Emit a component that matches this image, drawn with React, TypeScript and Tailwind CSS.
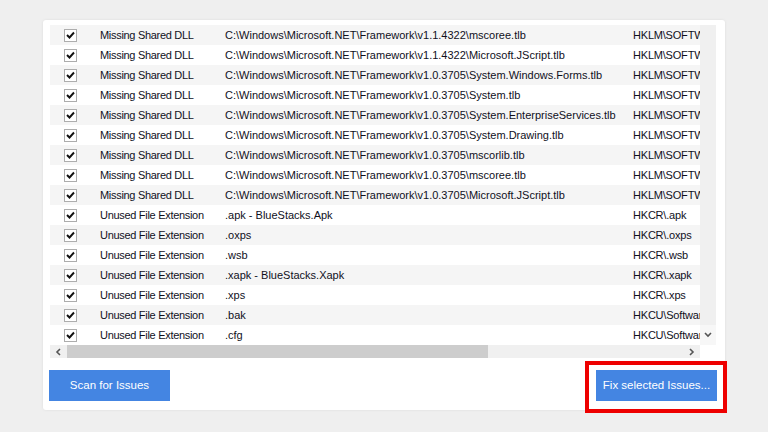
import React from 'react';

interface IssueRow {
  problem: string;
  data: string;
  registry: string;
}

const NET = 'C:\\Windows\\Microsoft.NET\\Framework\\';

const rows: IssueRow[] = [
  { problem: 'Missing Shared DLL', data: NET + 'v1.1.4322\\mscoree.tlb', registry: 'HKLM\\SOFTWARE\\Classes\\TypeLib' },
  { problem: 'Missing Shared DLL', data: NET + 'v1.1.4322\\Microsoft.JScript.tlb', registry: 'HKLM\\SOFTWARE\\Classes\\TypeLib' },
  { problem: 'Missing Shared DLL', data: NET + 'v1.0.3705\\System.Windows.Forms.tlb', registry: 'HKLM\\SOFTWARE\\Classes\\TypeLib' },
  { problem: 'Missing Shared DLL', data: NET + 'v1.0.3705\\System.tlb', registry: 'HKLM\\SOFTWARE\\Classes\\TypeLib' },
  { problem: 'Missing Shared DLL', data: NET + 'v1.0.3705\\System.EnterpriseServices.tlb', registry: 'HKLM\\SOFTWARE\\Classes\\TypeLib' },
  { problem: 'Missing Shared DLL', data: NET + 'v1.0.3705\\System.Drawing.tlb', registry: 'HKLM\\SOFTWARE\\Classes\\TypeLib' },
  { problem: 'Missing Shared DLL', data: NET + 'v1.0.3705\\mscorlib.tlb', registry: 'HKLM\\SOFTWARE\\Classes\\TypeLib' },
  { problem: 'Missing Shared DLL', data: NET + 'v1.0.3705\\mscoree.tlb', registry: 'HKLM\\SOFTWARE\\Classes\\TypeLib' },
  { problem: 'Missing Shared DLL', data: NET + 'v1.0.3705\\Microsoft.JScript.tlb', registry: 'HKLM\\SOFTWARE\\Classes\\TypeLib' },
  { problem: 'Unused File Extension', data: '.apk - BlueStacks.Apk', registry: 'HKCR\\.apk' },
  { problem: 'Unused File Extension', data: '.oxps', registry: 'HKCR\\.oxps' },
  { problem: 'Unused File Extension', data: '.wsb', registry: 'HKCR\\.wsb' },
  { problem: 'Unused File Extension', data: '.xapk - BlueStacks.Xapk', registry: 'HKCR\\.xapk' },
  { problem: 'Unused File Extension', data: '.xps', registry: 'HKCR\\.xps' },
  { problem: 'Unused File Extension', data: '.bak', registry: 'HKCU\\Software\\Microsoft\\Windows' },
  { problem: 'Unused File Extension', data: '.cfg', registry: 'HKCU\\Software\\Microsoft\\Windows' },
];

const CheckBox: React.FC = () => (
  <div className="w-[13px] h-[13px] border border-[#adadad] bg-white flex items-center justify-center">
    <svg width="9" height="8" viewBox="0 0 9 8">
      <path d="M1 4 L3.5 6.5 L8 1.5" fill="none" stroke="#111" strokeWidth="1.9" />
    </svg>
  </div>
);

const Chevron: React.FC<{ dir: 'left' | 'right' | 'down' }> = ({ dir }) => {
  const d = dir === 'left' ? 'M5 1 L2 4 L5 7' : dir === 'right' ? 'M2 1 L5 4 L2 7' : 'M1 2 L4 5 L7 2';
  return (
    <svg width="8" height="8" viewBox="0 0 8 8">
      <path d={d} fill="none" stroke="#555" strokeWidth="1.6" />
    </svg>
  );
};

export default function App() {
  return (
    <div
      className="w-[768px] h-[432px] bg-[#efefef] relative overflow-hidden pt-[20px] pl-[43px]"
      style={{ fontFamily: '"Liberation Sans", Arial, sans-serif' }}
    >
      <div className="w-[682px] h-[390px] bg-white rounded-[3px] shadow-[0_0_3px_rgba(0,0,0,0.08)] pt-[5px] pl-[7px] flex flex-col">
        {/* list + scrollbars */}
        <div className="flex w-[666px]">
          <div className="w-[650px] flex flex-col">
            <div className="flex flex-col">
              {rows.map((r, i) => (
                <div
                  key={i}
                  className={`h-[20px] flex items-center overflow-hidden whitespace-nowrap text-[11px] text-[#10101c] ${i % 2 === 0 ? 'bg-[#f5f5f5]' : 'bg-white'}`}
                >
                  <div className="w-[50px] shrink-0 pl-[14px]">
                    <CheckBox />
                  </div>
                  <div className="w-[125px] shrink-0 tracking-[-0.3px]">{r.problem}</div>
                  <div className="w-[408px] shrink-0 tracking-[0px]">{r.data}</div>
                  <div className="shrink-0 tracking-[-0.2px]">{r.registry}</div>
                </div>
              ))}
            </div>
            {/* horizontal scrollbar */}
            <div className="h-[13px] bg-[#f0f0f0] flex items-center">
              <div className="w-[17px] h-full flex items-center justify-center">
                <Chevron dir="left" />
              </div>
              <div className="w-[421px] h-full bg-[#cdcdcd]" />
              <div className="flex-1" />
              <div className="w-[17px] h-full flex items-center justify-center">
                <Chevron dir="right" />
              </div>
            </div>
          </div>
          {/* vertical scrollbar */}
          <div className="w-[16px] flex flex-col">
            <div className="h-[300px] bg-[#f0f0f0]" />
            <div className="h-[20px] bg-[#f7f7f7] flex items-center justify-center">
              <Chevron dir="down" />
            </div>
            <div className="flex-1 bg-white" />
          </div>
        </div>

        {/* buttons */}
        <div className="flex justify-between mt-[12px] pr-[8px] -ml-[1px]">
          <button className="w-[121px] h-[31px] bg-[#4485e2] text-white text-[11.5px]">
            Scan for Issues
          </button>
          <button className="w-[121px] h-[31px] bg-[#4485e2] text-white text-[11.5px]">
            Fix selected Issues...
          </button>
        </div>
      </div>

      {/* red highlight */}
      <div className="absolute left-[585px] top-[361px] w-[142px] h-[52px] border-[4px] border-[#ee0000]" />
    </div>
  );
}
